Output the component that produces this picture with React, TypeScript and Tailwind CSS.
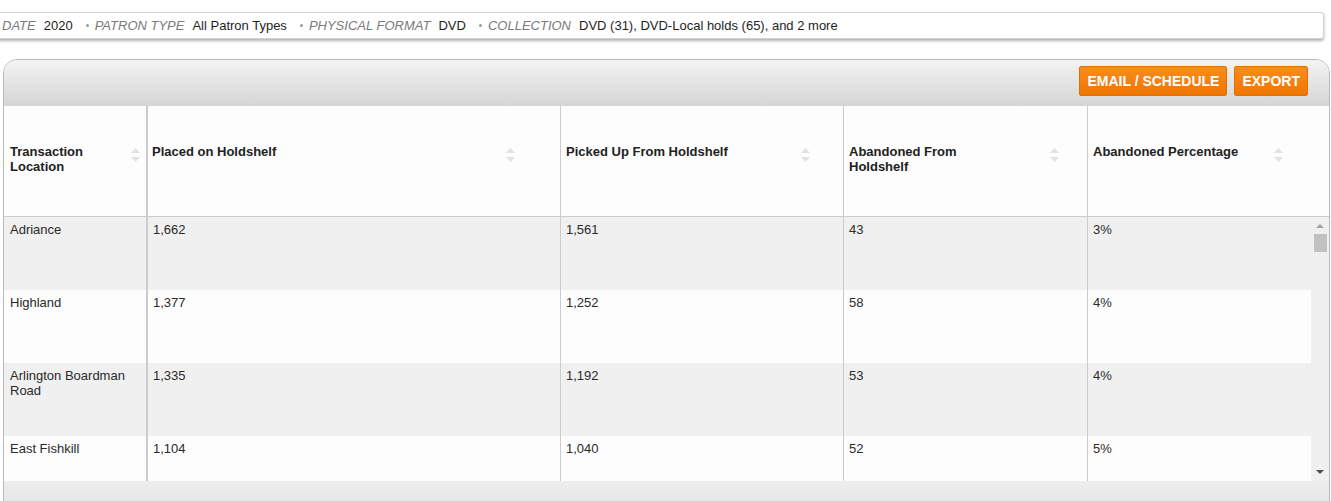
import React from 'react';

const filters = [
  { label: 'DATE', value: '2020' },
  { label: 'PATRON TYPE', value: 'All Patron Types' },
  { label: 'PHYSICAL FORMAT', value: 'DVD' },
  { label: 'COLLECTION', value: 'DVD (31), DVD-Local holds (65), and 2 more' },
];

const rows = [
  ['Adriance', '1,662', '1,561', '43', '3%'],
  ['Highland', '1,377', '1,252', '58', '4%'],
  ['Arlington Boardman Road', '1,335', '1,192', '53', '4%'],
  ['East Fishkill', '1,104', '1,040', '52', '5%'],
];

const SortIcon = () => (
  <svg width="9" height="14" viewBox="0 0 9 14" className="shrink-0 mt-[4px]">
    <path d="M4.5 0 L9 5 L0 5 Z" fill="#e2e2e2" />
    <path d="M0 9 L9 9 L4.5 14 Z" fill="#e2e2e2" />
  </svg>
);

export default function App() {
  return (
    <div className="w-[1331px] h-[501px] overflow-hidden bg-white font-['Liberation_Sans',Arial,sans-serif] text-[13px]">
      {/* Filter summary */}
      <div className="pt-3">
        <div className="-ml-[6px] w-[1330px] h-[27px] bg-white border border-[#d2d2d2] rounded-r-[3px] shadow-[0_2px_3px_rgba(0,0,0,0.3)] flex items-center pl-[7px] leading-[15px]">
          {filters.map((f, i) => (
            <React.Fragment key={f.label}>
              {i > 0 && <span className="ml-[13px] mr-[6px] w-[3px] h-[3px] rounded-full bg-[#9a9a9a]" />}
              <span className="italic text-[#7a7a7a] mr-[8px]">{f.label}</span>
              <span className="text-[#1e1e1e]">{f.value}</span>
            </React.Fragment>
          ))}
        </div>
      </div>

      {/* Report panel */}
      <div className="mt-[20px] ml-[3px] w-[1327px] h-[500px] border border-[#b8b8b8] rounded-t-[14px] overflow-hidden">
        {/* Toolbar */}
        <div className="h-[46px] bg-gradient-to-b from-[#f4f4f4] to-[#d5d5d5] flex justify-end items-start pt-[6px] pr-[21px] gap-[7px]">
          <button className="h-[30px] px-[7px] rounded-[2px] border border-[#e27000] bg-gradient-to-b from-[#fb8c1a] to-[#ef7500] text-white font-bold text-[14px] leading-none">
            EMAIL / SCHEDULE
          </button>
          <button className="h-[30px] px-[7px] rounded-[2px] border border-[#e27000] bg-gradient-to-b from-[#fb8c1a] to-[#ef7500] text-white font-bold text-[14px] leading-none">
            EXPORT
          </button>
        </div>

        {/* Table header */}
        <div className="h-[111px] bg-[#fdfdfd] border-b border-[#cccccc] grid grid-cols-[142px_414px_283px_244px_214px_1fr] text-[#222] font-bold leading-[15px]">
          <div className="flex pl-[6px] pr-[6px] pt-[38px]">
            <div className="flex-1">Transaction<br />Location</div>
            <SortIcon />
          </div>
          <div className="flex border-l-2 border-[#cccccc] pl-[4px] pr-[45px] pt-[38px]">
            <div className="flex-1">Placed on Holdshelf</div>
            <SortIcon />
          </div>
          <div className="flex border-l border-[#cccccc] pl-[5px] pr-[33px] pt-[38px]">
            <div className="flex-1">Picked Up From Holdshelf</div>
            <SortIcon />
          </div>
          <div className="flex border-l border-[#cccccc] pl-[5px] pr-[28px] pt-[38px]">
            <div className="flex-1">Abandoned From<br />Holdshelf</div>
            <SortIcon />
          </div>
          <div className="flex border-l border-[#cccccc] pl-[5px] pr-[18px] pt-[38px]">
            <div className="flex-1">Abandoned Percentage</div>
            <SortIcon />
          </div>
          <div />
        </div>

        {/* Table body */}
        <div className="flex h-[264px] overflow-hidden">
          <div className="w-[1307px] shrink-0">
            {rows.map((r, i) => (
              <div
                key={r[0]}
                className={`h-[73px] grid grid-cols-[142px_414px_283px_244px_1fr] text-[#2a2a2a] leading-[15px] ${i % 2 === 0 ? 'bg-[#f0f0f0]' : 'bg-[#fdfdfd]'}`}
              >
                <div className="pl-[6px] pr-[8px] pt-[5px]">{r[0]}</div>
                <div className="border-l-2 border-[#cccccc] pl-[5px] pt-[5px]">{r[1]}</div>
                <div className="border-l border-[#cccccc] pl-[5px] pt-[5px]">{r[2]}</div>
                <div className="border-l border-[#cccccc] pl-[5px] pt-[5px]">{r[3]}</div>
                <div className="border-l border-[#cccccc] pl-[5px] pt-[5px]">{r[4]}</div>
              </div>
            ))}
          </div>
          {/* Scrollbar */}
          <div className="flex-1 bg-[#f0f0f0] flex flex-col items-center">
            <svg width="8" height="4" viewBox="0 0 8 4" className="mt-[7px]">
              <path d="M4 0 L8 4 L0 4 Z" fill="#a3a3a3" />
            </svg>
            <div className="mt-[6px] w-[13px] h-[18px] bg-[#c1c1c1]" />
            <div className="flex-1" />
            <svg width="8" height="4" viewBox="0 0 8 4" className="mb-[7px]">
              <path d="M0 0 L8 0 L4 4 Z" fill="#505050" />
            </svg>
          </div>
        </div>

        {/* Footer */}
        <div className="h-[40px] bg-gradient-to-b from-[#eeeeee] to-[#e0e0e0]" />
      </div>
    </div>
  );
}
